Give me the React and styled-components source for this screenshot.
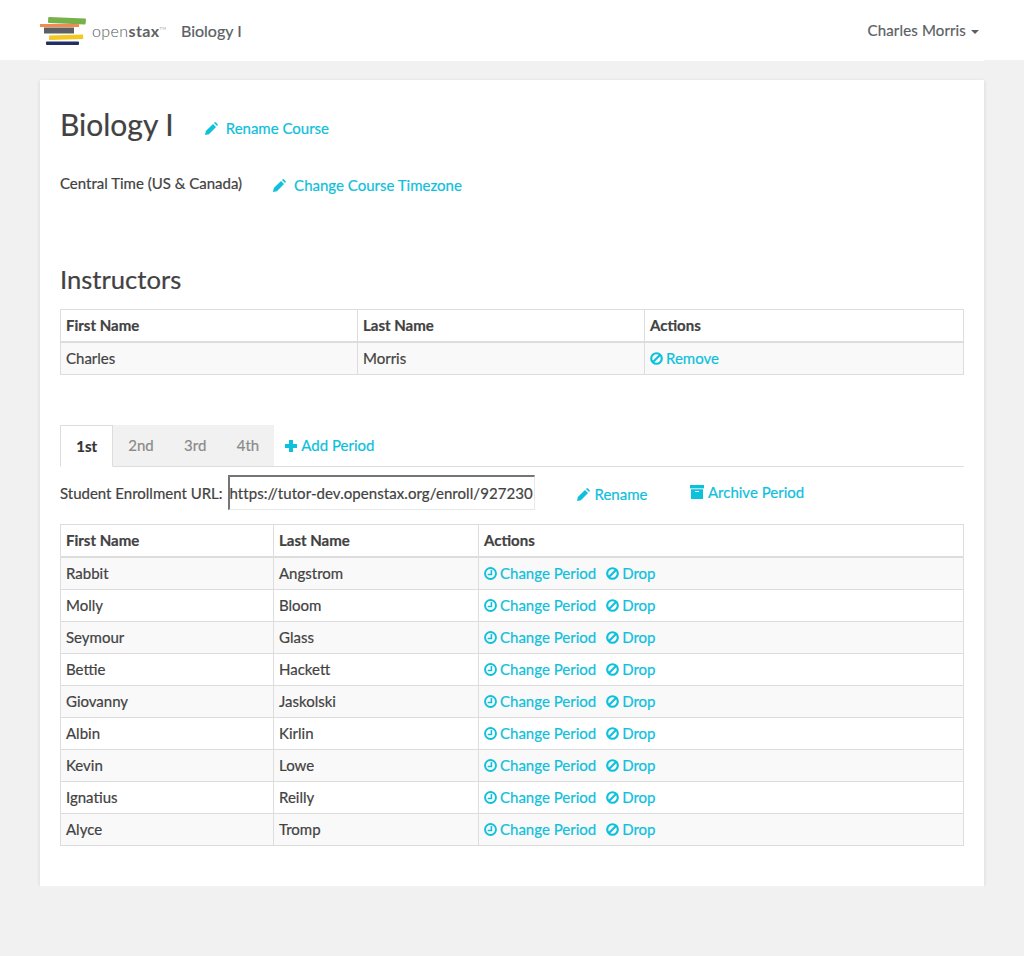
import React from "react";
import styled, { createGlobalStyle } from "styled-components";

const students = [
  ["Rabbit", "Angstrom"],
  ["Molly", "Bloom"],
  ["Seymour", "Glass"],
  ["Bettie", "Hackett"],
  ["Giovanny", "Jaskolski"],
  ["Albin", "Kirlin"],
  ["Kevin", "Lowe"],
  ["Ignatius", "Reilly"],
  ["Alyce", "Tromp"],
];

function App() {
  return (
    <>
      <GlobalStyle />
      <Navbar>
        <NavInner>
          <Brand>
            <Logo />
            <Wordmark>
              open<b>stax</b>
              <sup>TM</sup>
            </Wordmark>
            <CourseName>Biology I</CourseName>
          </Brand>
          <UserMenu>
            Charles Morris <Caret />
          </UserMenu>
        </NavInner>
      </Navbar>
      <Card>
        <TitleRow>
          <Title>Biology I</Title>
          <TitleLink href="#" $gap="8px">
            <PencilIcon />
            Rename Course
          </TitleLink>
        </TitleRow>
        <TimezoneRow>
          <TimezoneName>Central Time (US &amp; Canada)</TimezoneName>
          <ActionLink href="#" $gap="8px">
            <PencilIcon />
            Change Course Timezone
          </ActionLink>
        </TimezoneRow>
        <SectionTitle>Instructors</SectionTitle>
        <Table>
          <colgroup>
            <col width="297" />
            <col width="287" />
            <col />
          </colgroup>
          <thead>
            <tr>
              <th>First Name</th>
              <th>Last Name</th>
              <th>Actions</th>
            </tr>
          </thead>
          <tbody>
            <tr>
              <td>Charles</td>
              <td>Morris</td>
              <td>
                <ActionLink href="#">
                  <BanIcon />
                  Remove
                </ActionLink>
              </td>
            </tr>
          </tbody>
        </Table>
        <Tabs>
          <Tab $active>1st</Tab>
          <Tab>2nd</Tab>
          <Tab>3rd</Tab>
          <Tab>4th</Tab>
          <AddPeriod href="#" $gap="4px">
            <PlusIcon />
            Add Period
          </AddPeriod>
        </Tabs>
        <EnrollRow>
          <EnrollLabel>Student Enrollment URL:</EnrollLabel>
          <UrlInput readOnly value="https://tutor-dev.openstax.org/enroll/927230" />
          <RenameLink href="#" $gap="5px">
            <PencilIcon />
            Rename
          </RenameLink>
          <ArchiveLink href="#" $gap="4px">
            <ArchiveIcon />
            Archive Period
          </ArchiveLink>
        </EnrollRow>
        <Table>
          <colgroup>
            <col width="213" />
            <col width="205" />
            <col />
          </colgroup>
          <thead>
            <tr>
              <th>First Name</th>
              <th>Last Name</th>
              <th>Actions</th>
            </tr>
          </thead>
          <tbody>
            {students.map(([first, last]) => (
              <tr key={last}>
                <td>{first}</td>
                <td>{last}</td>
                <td>
                  <ActionLink href="#">
                    <ClockIcon />
                    Change Period
                  </ActionLink>
                  <DropLink href="#">
                    <BanIcon />
                    Drop
                  </DropLink>
                </td>
              </tr>
            ))}
          </tbody>
        </Table>
      </Card>
    </>
  );
}

function Logo() {
  return (
    <svg width="46" height="32" viewBox="0 0 46 32">
      <path d="M9 2 L45 3.5 Q46 3.6 46 4.5 L45.6 8.5 Q45.5 9.5 44.6 9.5 L9 8 Q8 8 8 7 L8.2 3 Q8.2 2 9 2 Z" fill="#78b04a" />
      <rect x="0" y="9" width="39" height="3" fill="#f58a4f" />
      <rect x="4" y="12.5" width="30" height="6" fill="#5d6062" />
      <path d="M9 20.5 L43 19.5 L43.2 24 L9.2 25 Z" fill="#f4c81e" />
      <rect x="6" y="26.5" width="33" height="3.5" rx="1" fill="#232e66" />
    </svg>
  );
}

function PencilIcon() {
  return (
    <svg width="13" height="13" viewBox="0 0 14 14" fill="currentColor">
      <path d="M0 14 L0.9 9.8 L8.6 2.1 L11.9 5.4 L4.2 13.1 Z" />
      <path d="M9.7 1 L10.4 0.4 Q11 0 11.7 0.4 L13.6 2.3 Q14 3 13.6 3.6 L13 4.3 Z" />
    </svg>
  );
}

function BanIcon() {
  return (
    <svg width="13" height="13" viewBox="0 0 14 14" fill="none" stroke="currentColor" strokeWidth="2.3">
      <circle cx="7" cy="7" r="5.7" />
      <path d="M3 11 L11 3" />
    </svg>
  );
}

function ClockIcon() {
  return (
    <svg width="13" height="13" viewBox="0 0 14 14" fill="none" stroke="currentColor" strokeWidth="2">
      <circle cx="7" cy="7" r="5.9" />
      <path d="M8 3.2 V8 H4" strokeWidth="1.7" />
    </svg>
  );
}

function PlusIcon() {
  return (
    <svg width="12" height="12" viewBox="0 0 12 12" fill="currentColor">
      <path d="M4 0 H8 V4 H12 V8 H8 V12 H4 V8 H0 V4 H4 Z" />
    </svg>
  );
}

function ArchiveIcon() {
  return (
    <svg width="14" height="14" viewBox="0 0 14 14" fill="currentColor">
      <rect x="0" y="0" width="14" height="3.4" />
      <path fillRule="evenodd" d="M1 4.2 H13 V14 H1 Z M5 6 V7 H9 V6 Z" />
    </svg>
  );
}

const GlobalStyle = createGlobalStyle`
  body {
    margin: 0;
    background: #f1f1f1;
    font-family: Lato, "Liberation Sans", sans-serif;
    font-size: 15px;
    line-height: 21px;
    color: #424242;
    -webkit-text-stroke: 0.2px;
  }
  * {
    box-sizing: border-box;
  }
`;

const Navbar = styled.nav`
  height: 60px;
  background: #fff;
`;

const NavInner = styled.div`
  height: 61px;
  margin: 0 40px;
  background: #fff;
  display: flex;
  justify-content: space-between;
  align-items: center;
  position: relative;
`;

const Brand = styled.div`
  display: flex;
  align-items: center;
`;

const Wordmark = styled.span`
  margin-left: 6px;
  width: 89px;
  font-size: 16px;
  font-weight: 300;
  letter-spacing: 0.4px;
  color: #555759;
  -webkit-text-stroke: 0;
  b {
    font-weight: 700;
    color: #5f6163;
  }
  sup {
    font-size: 4px;
    vertical-align: 7px;
    line-height: 0;
  }
`;

const CourseName = styled.span`
  color: #5b5f63;
  font-size: 16px;
`;

const UserMenu = styled.div`
  margin-right: 5px;
  color: #5b5f63;
  letter-spacing: 0.15px;
  display: flex;
  align-items: center;
  gap: 5px;
`;

const Caret = styled.span`
  width: 0;
  height: 0;
  margin-top: 2px;
  border-top: 4px solid #5b5f63;
  border-left: 4px solid transparent;
  border-right: 4px solid transparent;
`;

const Card = styled.main`
  width: 944px;
  height: 806px;
  margin: 20px 40px 0;
  padding: 20px;
  background: #fff;
  box-shadow: 0 1px 4px rgba(0, 0, 0, 0.12);
`;

const TitleRow = styled.div`
  display: flex;
  align-items: center;
  gap: 31px;
  height: 50px;
`;

const Title = styled.h1`
  margin: -2px 0 0;
  font-size: 30px;
  font-weight: 400;
  line-height: 50px;
`;

const ActionLink = styled.a`
  color: #0dc0dc;
  text-decoration: none;
  white-space: nowrap;
  svg {
    vertical-align: -1px;
    margin-right: ${(p) => p.$gap || "3px"};
  }
`;

const TitleLink = styled(ActionLink)`
  margin-top: 6px;
`;

const TimezoneRow = styled.div`
  display: flex;
  gap: 31px;
  margin-top: 22px;
  height: 32px;
  ${ActionLink} {
    margin-top: 3px;
  }
`;

const TimezoneName = styled.span`
  margin-top: 1px;
`;

const SectionTitle = styled.h2`
  margin: 60px 0 15px;
  font-size: 25.6px;
  font-weight: 400;
  line-height: 30px;
`;

const Table = styled.table`
  width: 904px;
  table-layout: fixed;
  border-collapse: collapse;
  th,
  td {
    border: 1px solid #ddd;
    padding: 5px;
    text-align: left;
    height: 32px;
  }
  th {
    font-weight: 700;
    border-bottom-width: 2px;
  }
  tbody tr:nth-child(odd) {
    background: #f9f9f9;
  }
`;

const Tabs = styled.div`
  display: flex;
  align-items: stretch;
  height: 42px;
  margin-top: 50px;
  border-bottom: 1px solid #ddd;
`;

const Tab = styled.div`
  height: ${(p) => (p.$active ? "42px" : "41px")};
  padding: 10px 15.2px 0;
  width: ${(p) => (p.$active ? "53px" : "auto")};
  text-align: center;
  background: ${(p) => (p.$active ? "#fff" : "#f1f1f1")};
  color: ${(p) => (p.$active ? "#333" : "#8a8a8a")};
  font-weight: ${(p) => (p.$active ? 700 : 400)};
  border: ${(p) => (p.$active ? "1px solid #ddd" : "none")};
  border-bottom: ${(p) => (p.$active ? "1px solid #fff" : "none")};
`;

const AddPeriod = styled(ActionLink)`
  margin-left: 11px;
  padding-top: 10px;
`;

const EnrollRow = styled.div`
  display: flex;
  align-items: center;
  height: 35px;
  margin: 8px 0 14px;
`;

const EnrollLabel = styled.label`
  margin-top: 2px;
`;

const UrlInput = styled.input`
  width: 307px;
  height: 35px;
  margin-left: 5px;
  padding: 0;
  font-family: Lato, "Liberation Sans", sans-serif;
  font-size: 15px;
  letter-spacing: 0.07px;
  color: #424242;
  border-style: solid;
  border-width: 2px 1px 1px 2px;
  border-color: #767676 #e8e8e8 #e8e8e8 #767676;
  outline: none;
`;

const RenameLink = styled(ActionLink)`
  margin: 4px 0 0 42px;
`;

const ArchiveLink = styled(ActionLink)`
  margin: 0 0 0 42.5px;
`;

const DropLink = styled(ActionLink)`
  margin-left: 10px;
`;

export default App;
